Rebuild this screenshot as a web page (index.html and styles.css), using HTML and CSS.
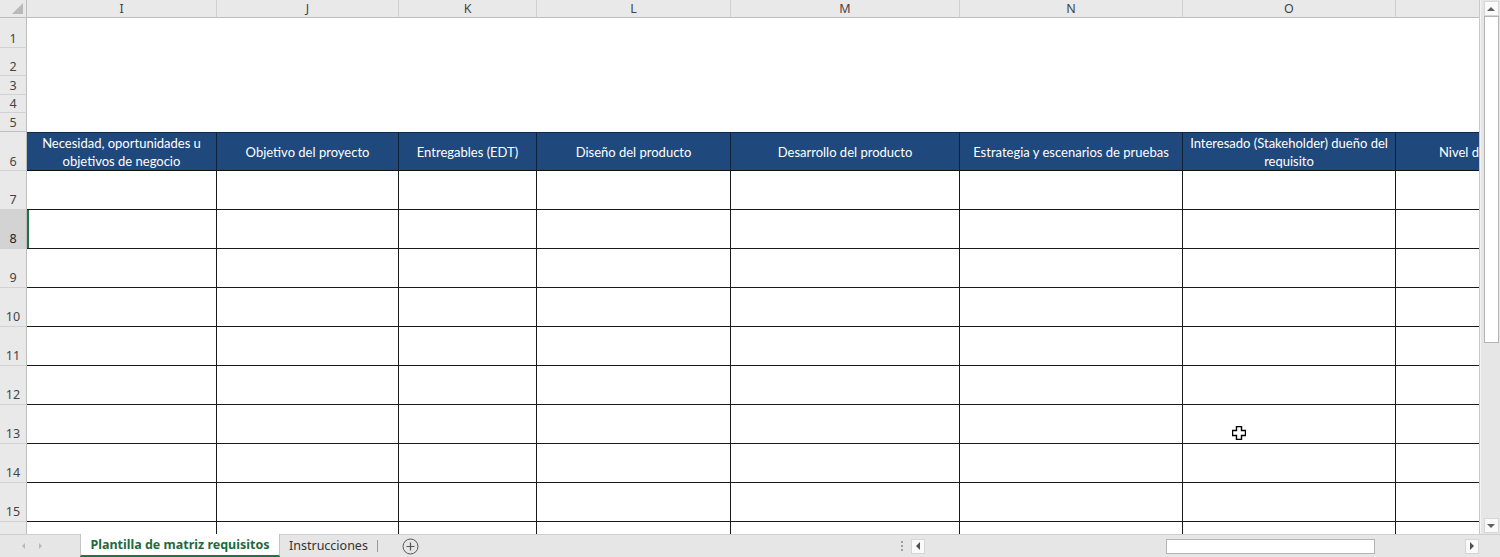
FILE: index.html
```html
<!DOCTYPE html>
<html lang="es">
<head>
<meta charset="utf-8">
<title>Matriz de requisitos</title>
<link rel="stylesheet" href="styles.css">
</head>
<body>
<div class="app">
  <div class="main">
    <div class="sheet">
      <div class="row colhead">
        <div class="rh corner"><span class="tri"></span></div>
        <div class="c ci">I</div>
        <div class="c cj">J</div>
        <div class="c ck">K</div>
        <div class="c cl">L</div>
        <div class="c cm">M</div>
        <div class="c cn">N</div>
        <div class="c co">O</div>
        <div class="c cp"></div>
      </div>

      <div class="row blank r1"><div class="rh">1</div><div class="fill"></div></div>
      <div class="row blank r2"><div class="rh">2</div><div class="fill"></div></div>
      <div class="row blank r3"><div class="rh">3</div><div class="fill"></div></div>
      <div class="row blank r4"><div class="rh">4</div><div class="fill"></div></div>
      <div class="row blank r5"><div class="rh">5</div><div class="fill"></div></div>

      <div class="row head">
        <div class="rh">6</div>
        <div class="c ci">Necesidad, oportunidades u<br>objetivos de negocio</div>
        <div class="c cj">Objetivo del proyecto</div>
        <div class="c ck">Entregables (EDT)</div>
        <div class="c cl">Diseño del producto</div>
        <div class="c cm">Desarrollo del producto</div>
        <div class="c cn">Estrategia y escenarios de pruebas</div>
        <div class="c co">Interesado (Stakeholder) dueño del<br>requisito</div>
        <div class="c cp">Nivel de prioridad</div>
      </div>

      <div class="row body"><div class="rh">7</div><div class="c ci"></div><div class="c cj"></div><div class="c ck"></div><div class="c cl"></div><div class="c cm"></div><div class="c cn"></div><div class="c co"></div><div class="c cp"></div></div>
      <div class="row body sel"><div class="rh">8</div><div class="c ci active"></div><div class="c cj"></div><div class="c ck"></div><div class="c cl"></div><div class="c cm"></div><div class="c cn"></div><div class="c co"></div><div class="c cp"></div></div>
      <div class="row body"><div class="rh">9</div><div class="c ci"></div><div class="c cj"></div><div class="c ck"></div><div class="c cl"></div><div class="c cm"></div><div class="c cn"></div><div class="c co"></div><div class="c cp"></div></div>
      <div class="row body"><div class="rh">10</div><div class="c ci"></div><div class="c cj"></div><div class="c ck"></div><div class="c cl"></div><div class="c cm"></div><div class="c cn"></div><div class="c co"></div><div class="c cp"></div></div>
      <div class="row body"><div class="rh">11</div><div class="c ci"></div><div class="c cj"></div><div class="c ck"></div><div class="c cl"></div><div class="c cm"></div><div class="c cn"></div><div class="c co"></div><div class="c cp"></div></div>
      <div class="row body"><div class="rh">12</div><div class="c ci"></div><div class="c cj"></div><div class="c ck"></div><div class="c cl"></div><div class="c cm"></div><div class="c cn"></div><div class="c co"></div><div class="c cp"></div></div>
      <div class="row body"><div class="rh">13</div><div class="c ci"></div><div class="c cj"></div><div class="c ck"></div><div class="c cl"></div><div class="c cm"></div><div class="c cn"></div><div class="c co"></div><div class="c cp"></div></div>
      <div class="row body"><div class="rh">14</div><div class="c ci"></div><div class="c cj"></div><div class="c ck"></div><div class="c cl"></div><div class="c cm"></div><div class="c cn"></div><div class="c co"></div><div class="c cp"></div></div>
      <div class="row body"><div class="rh">15</div><div class="c ci"></div><div class="c cj"></div><div class="c ck"></div><div class="c cl"></div><div class="c cm"></div><div class="c cn"></div><div class="c co"></div><div class="c cp"></div></div>
      <div class="row body"><div class="rh"></div><div class="c ci"></div><div class="c cj"></div><div class="c ck"></div><div class="c cl"></div><div class="c cm"></div><div class="c cn"></div><div class="c co"></div><div class="c cp"></div></div>

      <svg class="cursor" width="14" height="14" viewBox="0 0 14 14">
        <path d="M4.5 0.5h5v4h4v5h-4v4h-5v-4h-4v-5h4z" fill="#fff" stroke="#000" stroke-width="1.4" stroke-linejoin="miter"/>
      </svg>
    </div>
    <div class="vscroll">
      <div class="vbtn up"><span class="arrow-up"></span></div>
      <div class="vtrack"><div class="vthumb"></div></div>
      <div class="vbtn down"><span class="arrow-down"></span></div>
    </div>
  </div>

  <div class="tabbar">
    <div class="nav">
      <span class="nav-l"></span>
      <span class="nav-r"></span>
    </div>
    <div class="tab active-tab">Plantilla de matriz requisitos</div>
    <div class="tab">Instrucciones</div>
    <div class="tabsep"></div>
    <div class="addsheet">
      <svg width="17" height="17" viewBox="0 0 17 17"><circle cx="8.5" cy="8.5" r="7.5" fill="none" stroke="#555" stroke-width="1"/><path d="M8.5 4.5v8M4.5 8.5h8" stroke="#555" stroke-width="1.2"/></svg>
    </div>
    <div class="spacer"></div>
    <div class="dots"><i></i><i></i><i></i></div>
    <div class="hscroll">
      <div class="hbtn"><span class="arrow-left"></span></div>
      <div class="htrack"><div class="hthumb"></div></div>
      <div class="hbtn"><span class="arrow-right"></span></div>
    </div>
    <div class="endpad"></div>
  </div>
</div>
</body>
</html>
```

FILE: styles.css
```css
* { box-sizing: border-box; }
html, body { margin: 0; padding: 0; }
body {
  width: 1500px;
  height: 557px;
  overflow: hidden;
  background: #fff;
  font-family: "Noto Sans", "Open Sans", sans-serif;
}
.app { display: flex; flex-direction: column; width: 1500px; height: 557px; }
.main { display: flex; height: 534px; }

.sheet {
  position: relative;
  width: 1480px;
  height: 534px;
  overflow: hidden;
  border-right: 1px solid #c8c8c8;
  background: #fff;
}
.row { display: flex; width: max-content; }

.rh {
  flex: 0 0 27px;
  width: 27px;
  background: #e9e9e9;
  border-right: 1px solid #bdbdbd;
  border-bottom: 1px solid #d2d2d2;
  color: #444;
  font-size: 12.5px;
  display: flex;
  align-items: flex-end;
  justify-content: center;
  padding-bottom: 1px;
  line-height: 14px;
}

.c { flex: 0 0 auto; }
.ci { width: 190px; }
.cj { width: 182px; }
.ck { width: 138px; }
.cl { width: 194px; }
.cm { width: 229px; }
.cn { width: 223px; }
.co { width: 213px; }
.cp { width: 180px; }

/* column header */
.colhead { height: 18px; }
.colhead .rh.corner {
  position: relative;
  border-bottom: 1px solid #bdbdbd;
  padding: 0;
}
.tri {
  position: absolute;
  right: 3px;
  bottom: 3px;
  width: 0; height: 0;
  border-left: 11px solid transparent;
  border-bottom: 11px solid #b9b9b9;
}
.colhead .c {
  height: 18px;
  background: #e9e9e9;
  border-right: 1px solid #d0d0d0;
  border-bottom: 1px solid #bdbdbd;
  color: #444;
  font-size: 12.5px;
  line-height: 17px;
  text-align: center;
}

/* blank top rows */
.blank .fill { flex: 1 0 1460px; background: #fff; }
.r1 { height: 30px; }
.r2 { height: 28px; }
.r3 { height: 19px; }
.r4 { height: 18px; }
.r5 { height: 19px; }
.r5 .rh { border-bottom-color: #bdbdbd; }

/* table header row */
.head { height: 39px; }
.head .c {
  background: #1f497d;
  color: #fff;
  font-family: "Lato", "Noto Sans", sans-serif;
  font-size: 13px;
  line-height: 18px;
  text-align: center;
  display: flex;
  align-items: center;
  justify-content: center;
  border-top: 1px solid #102a4a;
  border-right: 1px solid #0f2238;
  border-bottom: 1px solid #111;
  white-space: nowrap;
  padding-top: 1px;
}
.head .c.cp { justify-content: flex-start; padding-left: 43px; }

/* body rows */
.body { height: 39px; }
.body .c {
  border-right: 1px solid #1a1a1a;
  border-bottom: 1px solid #1a1a1a;
  background: #fff;
}
.body .rh { padding-bottom: 2px; }
.sel .rh { background: #d3d3d3; color: #222; }
.active { box-shadow: inset 2px 0 0 #217346; }

.cursor { position: absolute; left: 1232px; top: 426px; }

/* vertical scrollbar */
.vscroll {
  width: 20px;
  height: 534px;
  background: #e6e6e6;
  display: flex;
  flex-direction: column;
  align-items: center;
  padding: 1px 0 1px 1px;
  border-left: 1px solid #f4f4f4;
}
.vbtn {
  width: 15px;
  height: 15px;
  background: #fafafa;
  border: 1px solid #d6d6d6;
  display: flex;
  align-items: center;
  justify-content: center;
  flex: 0 0 15px;
}
.vtrack { flex: 1; width: 15px; }
.vthumb {
  width: 15px;
  height: 327px;
  background: #fff;
  border: 1px solid #b4b4b4;
}
.arrow-up { width: 0; height: 0; border-left: 4px solid transparent; border-right: 4px solid transparent; border-bottom: 4px solid #606060; }
.arrow-down { width: 0; height: 0; border-left: 4px solid transparent; border-right: 4px solid transparent; border-top: 4px solid #606060; }

/* tab bar */
.tabbar {
  height: 23px;
  display: flex;
  align-items: stretch;
  background: #e6e6e6;
  border-top: 1px solid #cfcfcf;
}
.nav { width: 80px; display: flex; align-items: center; padding-left: 22px; gap: 14px; }
.nav-l { width: 0; height: 0; border-top: 3px solid transparent; border-bottom: 3px solid transparent; border-right: 3px solid #b8b8b8; }
.nav-r { width: 0; height: 0; border-top: 3px solid transparent; border-bottom: 3px solid transparent; border-left: 3px solid #b8b8b8; }
.tab {
  display: flex;
  align-items: center;
  font-size: 12.5px;
  color: #333;
  padding: 0 9px 1px 9px;
}
.active-tab {
  width: 200px;
  justify-content: center;
  background: #fff;
  color: #1e6b3b;
  font-weight: 700;
  border-left: 1px solid #c4c4c4;
  border-right: 1px solid #c4c4c4;
  border-bottom: 2px solid #217346;
  margin-top: -1px;
  padding: 0;
}
.tabsep { width: 1px; background: #9a9a9a; margin: 5px 0; }
.addsheet { width: 66px; display: flex; align-items: center; justify-content: center; }
.spacer { flex: 1; }
.dots { width: 12px; display: flex; flex-direction: column; align-items: center; justify-content: center; gap: 2px; margin-right: 3px; }
.dots i { display: block; width: 2px; height: 2px; background: #888; border-radius: 1px; }
.hscroll { width: 568px; display: flex; align-items: center; padding: 4px 0; }
.hbtn {
  width: 14px;
  height: 15px;
  background: #fafafa;
  border: 1px solid #d6d6d6;
  display: flex;
  align-items: center;
  justify-content: center;
  flex: 0 0 14px;
}
.htrack { flex: 1; height: 15px; display: flex; align-items: stretch; padding-left: 241px; }
.hthumb { width: 209px; background: #fff; border: 1px solid #b4b4b4; }
.arrow-left { width: 0; height: 0; border-top: 4px solid transparent; border-bottom: 4px solid transparent; border-right: 4px solid #505050; }
.arrow-right { width: 0; height: 0; border-top: 4px solid transparent; border-bottom: 4px solid transparent; border-left: 4px solid #505050; }
.endpad { width: 21px; }
```
